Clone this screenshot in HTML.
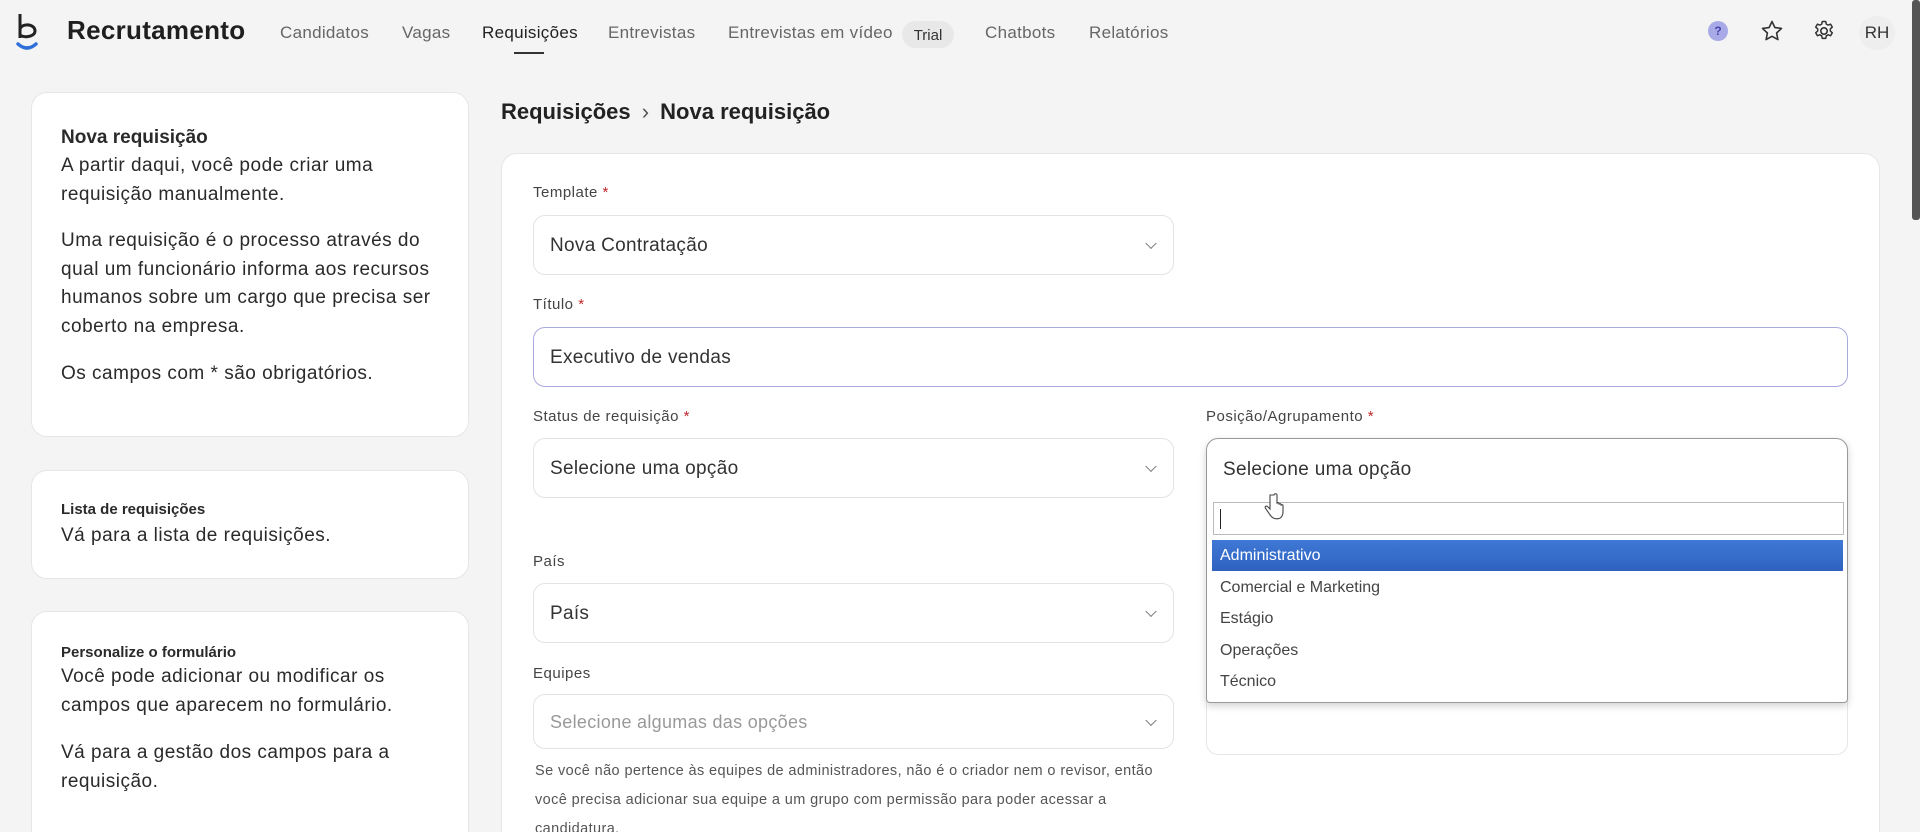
<!DOCTYPE html>
<html style="width:1920px;height:832px;overflow:hidden"><head><meta charset="utf-8"><style>
*{box-sizing:border-box;margin:0;padding:0}
body{width:1920px;height:832px;overflow:hidden;background:#f4f4f4;font-family:"Liberation Sans",sans-serif;color:#222;position:relative}
.a{position:absolute;white-space:nowrap}
.nav{font-size:17px;color:#666;top:23px;letter-spacing:.3px}
.card{position:absolute;background:#fff;border:1px solid #e6e6e6;border-radius:16px}
.lt{font-size:19px;color:#2a2a2a;line-height:28.7px;letter-spacing:.5px}
.lbl{font-size:15px;color:#444;letter-spacing:.5px}
.lbl b{color:#c0282d;font-weight:normal}
.sel{position:absolute;background:#fff;border:1px solid #e3e3e3;border-radius:12px;font-size:19px;color:#333;padding-left:16px;padding-top:2px;display:flex;align-items:center;letter-spacing:.3px}
.chev{position:absolute;right:18px;top:50%;width:8px;height:8px;border-right:1.5px solid #777;border-bottom:1.5px solid #777;transform:translateY(-70%) rotate(45deg)}
.opt{position:absolute;left:0;right:0;height:31px;font-size:16px;color:#444;padding-left:8px;line-height:32px}
</style></head><body>
<svg class="a" style="left:15px;top:12px" width="26" height="38" viewBox="0 0 26 38"><path d="M5 2 V26 M5 18 C5 11 20 11 20 19 C20 26 5 26 5 22" fill="none" stroke="#222" stroke-width="3"/><path d="M3 32 Q12 40 21 32" fill="none" stroke="#2f6fd8" stroke-width="3.5" stroke-linecap="round"/></svg>
<div class="a" style="left:67px;top:15px;font-size:26px;font-weight:bold;color:#1f1f1f;letter-spacing:.3px">Recrutamento</div>
<div class="a nav" style="left:280px">Candidatos</div>
<div class="a nav" style="left:402px">Vagas</div>
<div class="a nav" style="left:482px;color:#222">Requisições</div>
<div class="a" style="left:514px;top:52px;width:30px;height:2px;background:#333"></div>
<div class="a nav" style="left:608px">Entrevistas</div>
<div class="a nav" style="left:728px">Entrevistas em vídeo</div>
<div class="a" style="left:902px;top:21px;width:52px;height:27px;border-radius:14px;background:#e8e8e8;font-size:15px;color:#333;text-align:center;line-height:29px">Trial</div>
<div class="a nav" style="left:985px">Chatbots</div>
<div class="a nav" style="left:1089px">Relatórios</div>
<div class="a" style="left:1708px;top:21px;width:20px;height:20px;border-radius:50%;background:#a8aae8;color:#4444aa;font-size:12px;font-weight:bold;text-align:center;line-height:20px">?</div>
<svg class="a" style="left:1760px;top:19px" width="24" height="24" viewBox="0 0 24 24"><path d="M12 2.5l2.9 6.1 6.6.8-4.9 4.6 1.3 6.6L12 17.3l-5.9 3.3 1.3-6.6-4.9-4.6 6.6-.8z" fill="none" stroke="#333" stroke-width="1.6" stroke-linejoin="round"/></svg>
<svg class="a" style="left:1812px;top:19px" width="24" height="24" viewBox="0 0 24 24"><circle cx="12" cy="12" r="3.2" fill="none" stroke="#333" stroke-width="1.6"/><path d="M10.3 2.5h3.4l.6 2.6 1.8 1 2.5-.9 1.7 2.9-2 1.8v2.1l2 1.8-1.7 2.9-2.5-.9-1.8 1-.6 2.6h-3.4l-.6-2.6-1.8-1-2.5.9-1.7-2.9 2-1.8V9.9l-2-1.8 1.7-2.9 2.5.9 1.8-1z" fill="none" stroke="#333" stroke-width="1.5" stroke-linejoin="round"/></svg>
<div class="a" style="left:1859px;top:16px;width:36px;height:34px;border-radius:50%;background:#eee;font-size:17px;color:#333;text-align:center;line-height:34px">RH</div>
<div class="a" style="left:1912px;top:0;width:8px;height:220px;background:#555;border-radius:3px"></div>

<div class="card" style="left:31px;top:92px;width:438px;height:345px"></div>
<div class="a lt" style="left:61px;top:124px;font-weight:bold;letter-spacing:0">Nova requisição</div>
<div class="a lt" style="left:61px;top:152px">A partir daqui, você pode criar uma<br>requisição manualmente.</div>
<div class="a lt" style="left:61px;top:227px">Uma requisição é o processo através do<br>qual um funcionário informa aos recursos<br>humanos sobre um cargo que precisa ser<br>coberto na empresa.</div>
<div class="a lt" style="left:61px;top:360px">Os campos com * são obrigatórios.</div>

<div class="card" style="left:31px;top:470px;width:438px;height:109px"></div>
<div class="a" style="left:61px;top:501px;font-size:15px;font-weight:bold;color:#2a2a2a">Lista de requisições</div>
<div class="a lt" style="left:61px;top:522px">Vá para a lista de requisições.</div>

<div class="card" style="left:31px;top:611px;width:438px;height:240px"></div>
<div class="a" style="left:61px;top:644px;font-size:15px;font-weight:bold;color:#2a2a2a">Personalize o formulário</div>
<div class="a lt" style="left:61px;top:663px">Você pode adicionar ou modificar os<br>campos que aparecem no formulário.</div>
<div class="a lt" style="left:61px;top:739px">Vá para a gestão dos campos para a<br>requisição.</div>

<div class="a" style="left:501px;top:99px;font-size:22px;font-weight:bold;color:#222">Requisições <span style="font-weight:normal;color:#555;margin:0 5px">›</span> Nova requisição</div>

<div class="card" style="left:501px;top:153px;width:1379px;height:720px"></div>
<div class="a lbl" style="left:533px;top:184px">Template <b>*</b></div>
<div class="sel" style="left:533px;top:215px;width:641px;height:60px">Nova Contratação<span class="chev"></span></div>
<div class="a lbl" style="left:533px;top:296px">Título <b>*</b></div>
<div class="sel" style="left:533px;top:327px;width:1315px;height:60px;border-color:#a9a9dc">Executivo de vendas</div>
<div class="a lbl" style="left:533px;top:408px">Status de requisição <b>*</b></div>
<div class="sel" style="left:533px;top:438px;width:641px;height:60px">Selecione uma opção<span class="chev"></span></div>
<div class="a lbl" style="left:1206px;top:408px">Posição/Agrupamento <b>*</b></div>
<div class="a lbl" style="left:533px;top:553px">País</div>
<div class="sel" style="left:533px;top:583px;width:641px;height:60px">País<span class="chev"></span></div>
<div class="a lbl" style="left:533px;top:665px">Equipes</div>
<div class="sel" style="left:533px;top:694px;width:641px;height:55px;color:#999;font-size:18px">Selecione algumas das opções<span class="chev"></span></div>
<div class="a" style="left:535px;top:757px;font-size:14.5px;color:#555;line-height:29px;letter-spacing:.4px">Se você não pertence às equipes de administradores, não é o criador nem o revisor, então<br>você precisa adicionar sua equipe a um grupo com permissão para poder acessar a<br>candidatura.</div>

<div class="a" style="left:1206px;top:690px;width:642px;height:65px;background:#fff;border:1px solid #e6e6e6;border-radius:12px"></div>
<div class="a" style="left:1206px;top:438px;width:642px;height:265px;background:#fff;border:1px solid #999;border-radius:12px 12px 4px 4px;box-shadow:0 3px 8px rgba(0,0,0,.18)">
 <div class="a" style="left:16px;top:20px;font-size:19px;color:#333;letter-spacing:.3px">Selecione uma opção</div>
 <div class="a" style="left:6px;top:63px;width:631px;height:33px;border:1px solid #bbb;background:#fff"><div class="a" style="left:6px;top:6px;width:1px;height:20px;background:#222"></div></div>
 <div class="opt" style="top:101px;left:5px;right:4px;background:linear-gradient(#3f78d6,#2f62c0);color:#fff">Administrativo</div>
 <div class="opt" style="top:133px;left:5px">Comercial e Marketing</div>
 <div class="opt" style="top:164px;left:5px">Estágio</div>
 <div class="opt" style="top:196px;left:5px">Operações</div>
 <div class="opt" style="top:227px;left:5px">Técnico</div>
</div>
<svg class="a" style="left:1264px;top:492px" width="22" height="30" viewBox="0 0 22 30"><path d="M6 3 v14 l-2.5-2.5 c-1.5-1.2-3 .3-2 1.8 l4.5 6.5 c1.5 2.5 3.5 4 7 4 c4 0 6-3 6-7 v-6 c0-1.5-2-1.5-2 0 v-1 c0-1.5-2-1.5-2 0 v-1 c0-1.5-2-1.5-2 0 V3 c0-1.6-3-1.6-3 0z" fill="#fff" stroke="#444" stroke-width="1.1"/></svg>
</body></html>
